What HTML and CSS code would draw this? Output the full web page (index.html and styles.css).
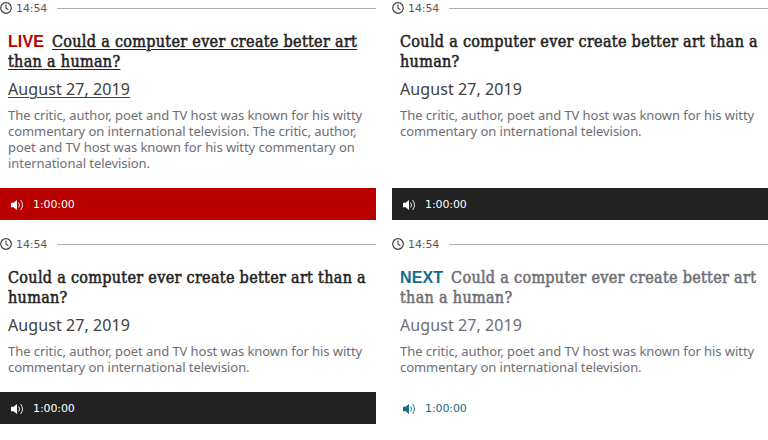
FILE: index.html
```
<!DOCTYPE html>
<html lang="en">
<head>
<meta charset="utf-8">
<title>Schedule</title>
<link rel="stylesheet" href="styles.css">
</head>
<body>
<svg class="defs" aria-hidden="true">
  <symbol id="clock" viewBox="0 0 12 12"><circle cx="6" cy="6" r="5.3" fill="none" stroke="currentColor" stroke-width="1.2"/><path d="M6 2.6V6.2L8.4 7.8" fill="none" stroke="currentColor" stroke-width="1.1"/></symbol>
  <symbol id="volume" viewBox="0 0 13 12"><path d="M0 3.8H2.6L6 1V11L2.6 8.2H0Z" fill="currentColor"/><path d="M7.6 3.5Q9.6 6 7.6 8.5M9.6 1Q13.4 6 9.6 11" fill="none" stroke="currentColor" stroke-width="0.9"/></symbol>
</svg>
<main class="grid">
  <article class="card live">
    <div class="start"><svg class="clock"><use href="#clock"/></svg><time>14:54</time><span class="rule"></span></div>
    <div class="body">
      <h3><span class="label">LIVE</span><span class="title">Could a computer ever create better art<br>than a human?</span></h3>
      <p class="date">August 27, 2019</p>
      <p class="summary">The critic, author, poet and TV host was known for his witty<br>commentary on international television. The critic, author,<br>poet and TV host was known for his witty commentary on<br>international television.</p>
    </div>
    <div class="bar"><svg class="volume"><use href="#volume"/></svg><span>1:00:00</span></div>
  </article>
  <article class="card">
    <div class="start"><svg class="clock"><use href="#clock"/></svg><time>14:54</time><span class="rule"></span></div>
    <div class="body">
      <h3><span class="title">Could a computer ever create better art than a<br>human?</span></h3>
      <p class="date">August 27, 2019</p>
      <p class="summary">The critic, author, poet and TV host was known for his witty<br>commentary on international television.</p>
    </div>
    <div class="bar"><svg class="volume"><use href="#volume"/></svg><span>1:00:00</span></div>
  </article>
  <article class="card">
    <div class="start"><svg class="clock"><use href="#clock"/></svg><time>14:54</time><span class="rule"></span></div>
    <div class="body">
      <h3><span class="title">Could a computer ever create better art than a<br>human?</span></h3>
      <p class="date">August 27, 2019</p>
      <p class="summary">The critic, author, poet and TV host was known for his witty<br>commentary on international television.</p>
    </div>
    <div class="bar"><svg class="volume"><use href="#volume"/></svg><span>1:00:00</span></div>
  </article>
  <article class="card next">
    <div class="start"><svg class="clock"><use href="#clock"/></svg><time>14:54</time><span class="rule"></span></div>
    <div class="body">
      <h3><span class="label">NEXT</span><span class="title">Could a computer ever create better art<br>than a human?</span></h3>
      <p class="date">August 27, 2019</p>
      <p class="summary">The critic, author, poet and TV host was known for his witty<br>commentary on international television.</p>
    </div>
    <div class="bar"><svg class="volume"><use href="#volume"/></svg><span>1:00:00</span></div>
  </article>
</main>
</body>
</html>
```
FILE: styles.css
```
body { margin: 0; background: #fff; font-family: "Noto Sans", sans-serif; color: #222; }
.defs { position: absolute; width: 0; height: 0; }
.grid { display: grid; grid-template-columns: 376px 376px; grid-template-rows: 220px 188px; gap: 16px; }
.card { display: flex; flex-direction: column; }
.start { display: flex; align-items: center; height: 16px; font-family: "DejaVu Sans", sans-serif; font-size: 11px; line-height: 14px; letter-spacing: -0.1px; color: #5a5a5a; }
.clock { width: 12px; height: 12px; margin-right: 4px; color: #404040; }
.start time { width: 31px; padding-top: 2px; white-space: nowrap; }
.rule { flex: 1; height: 1px; margin: 1px 0 0 10px; background: #aeaeb5; }
.body { padding: 16px 8px 0; white-space: nowrap; }
h3 { margin: 0; font-family: "DejaVu Serif Condensed", "DejaVu Serif", serif; font-size: 16px; line-height: 20px; font-weight: 400; }
.title { letter-spacing: 0.31px; -webkit-text-stroke: 0.5px currentColor; }
.label { margin-right: 8px; font-family: "Liberation Sans", sans-serif; font-size: 16px; font-weight: 700; line-height: 16px; letter-spacing: 0.1px; color: #b80000; }
.date { margin: 5px 0 0; font-size: 16px; line-height: 24px; letter-spacing: 0.08px; color: #404040; }
.summary { margin: 6px 0 0; font-size: 13px; line-height: 16px; letter-spacing: -0.06px; color: #6e6e73; }
.bar { display: flex; align-items: center; box-sizing: border-box; height: 32px; margin-top: auto; padding-left: 11px; background: #222; color: #fff; font-family: "DejaVu Sans", sans-serif; font-size: 11px; line-height: 14px; letter-spacing: -0.1px; }
.bar span { padding-top: 2px; }
.volume { width: 13px; height: 12px; margin: 2px 9px 0 0; }
.live .bar { background: #b80000; }
.live .title, .live .date { text-decoration: underline; text-underline-offset: 2px; text-decoration-thickness: 1px; }
.next .label { color: #126e8a; }
.next .title, .next .date { color: #6e6e73; }
.next .bar { background: transparent; color: #126e8a; }
```
